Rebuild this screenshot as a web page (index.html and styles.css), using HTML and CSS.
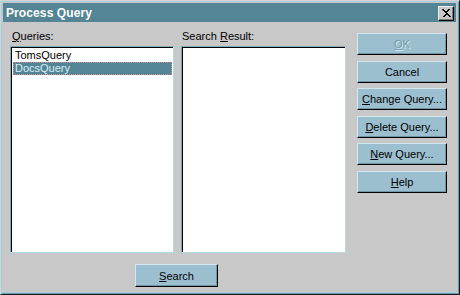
FILE: index.html
```html
<!DOCTYPE html>
<html>
<head>
  <meta charset="utf-8">
  <title>Process Query</title>
  <link rel="stylesheet" href="styles.css">
</head>
<body>
  <div class="window">
    <div class="titlebar">
      <span class="title">Process Query</span>
      <button class="close-btn" aria-label="Close">
        <svg width="10" height="9" viewBox="0 0 10 9">
          <path d="M1 0h2v1h1v1h2v-1h1v-1h2v1h-1v1h-1v1h-1v1h1v1h1v1h1v1h1v1h-2v-1h-1v-1h-2v1h-1v1h-2v-1h1v-1h1v-1h1v-1h-1v-1h-1v-1h-1z" fill="#000"/>
        </svg>
      </button>
    </div>

    <div class="content">
      <div class="main">
        <div class="lists">
          <div class="list-col left-col">
            <label class="label"><u>Q</u>ueries:</label>
            <div class="listbox">
              <div class="item">TomsQuery</div>
              <div class="item selected">DocsQuery</div>
            </div>
          </div>
          <div class="list-col right-col">
            <label class="label">Search <u>R</u>esult:</label>
            <div class="listbox"></div>
          </div>
        </div>
        <div class="footer">
          <button class="button search-btn"><u>S</u>earch</button>
        </div>
      </div>

      <div class="actions">
        <button class="button disabled"><u>O</u>K</button>
        <button class="button">Cancel</button>
        <button class="button"><u>C</u>hange Query...</button>
        <button class="button"><u>D</u>elete Query...</button>
        <button class="button"><u>N</u>ew Query...</button>
        <button class="button"><u>H</u>elp</button>
      </div>
    </div>
  </div>
</body>
</html>
```

FILE: styles.css
```css
body {
  margin: 0;
  width: 460px;
  height: 295px;
  overflow: hidden;
  font-family: "Liberation Sans", Arial, sans-serif;
  font-size: 11px;
  background: #c8c8c8;
}

.window {
  width: 460px;
  height: 295px;
  box-sizing: border-box;
  background: #c8c8c8;
  border: 1px solid;
  border-color: #d4d4d4 #1c1c1c #1c1c1c #d4d4d4;
  box-shadow: inset 1px 1px 0 #a6cedd, inset -1px -1px 0 #6c9aaa, inset -2px -2px 0 #a6cedd;
  padding: 2px 3px 3px 2px;
  display: flex;
  flex-direction: column;
}

.titlebar {
  height: 19px;
  background: #538594;
  display: flex;
  align-items: center;
  justify-content: space-between;
  padding: 0 2px 0 3px;
}

.title {
  color: white;
  font-weight: bold;
  font-size: 12px;
  letter-spacing: 0.1px;
  padding-top: 1px;
}

.close-btn {
  width: 16px;
  height: 15px;
  padding: 0;
  margin-top: 1px;
  background: #c8c8c8;
  border: 1px solid;
  border-color: #eeeeee #000 #000 #eeeeee;
  box-shadow: inset -1px -1px 0 #7c7c7c;
  display: flex;
  align-items: center;
  justify-content: center;
}

.content {
  flex: 1;
  display: flex;
  padding: 0 0 0 7px;
}

.main {
  display: flex;
  flex-direction: column;
}

.lists {
  display: flex;
  gap: 7px;
}

.list-col {
  display: flex;
  flex-direction: column;
}

.left-col {
  width: 164px;
}

.right-col {
  width: 165px;
}

.label {
  height: 24px;
  box-sizing: border-box;
  padding: 8px 0 0 2px;
  line-height: 13px;
  color: #000;
}

.right-col .label {
  padding-left: 1px;
}

.listbox {
  height: 207px;
  box-sizing: border-box;
  background: white;
  border: 1px solid;
  border-color: #7fa8b8 #b6dbe8 #b6dbe8 #7fa8b8;
  box-shadow: inset 1px 1px 0 #000;
  padding: 2px 1px 0 2px;
}

.item {
  height: 13px;
  line-height: 13px;
  padding-left: 2px;
  color: #000;
  font-size: 11px;
}

.item.selected {
  background: #538594;
  color: #d8eef6;
  outline: 1px dotted #c89090;
  outline-offset: -1px;
}

.footer {
  padding: 11px 0 0 125px;
}

.button {
  font-family: "Liberation Sans", Arial, sans-serif;
  font-size: 11px;
  color: #000;
  background: #9cbfcf;
  border: 1px solid;
  border-color: #d2e8f0 #000 #000 #d2e8f0;
  box-shadow: inset -1px -1px 0 #6f97a6;
  padding: 0;
  height: 22px;
  cursor: pointer;
}

.search-btn {
  width: 83px;
  height: 23px;
}

.actions {
  display: flex;
  flex-direction: column;
  gap: 5.6px;
  margin: 11px 0 0 11px;
}

.actions .button {
  width: 90px;
}

.button.disabled {
  color: #7799a8;
  text-shadow: 1px 1px 0 #d2e8f0;
}
```
